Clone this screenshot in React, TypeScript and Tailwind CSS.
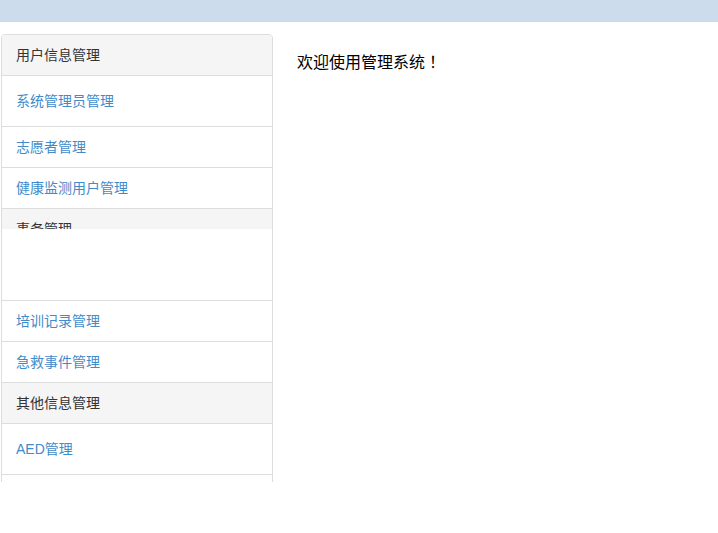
import React from "react";

const font = { fontFamily: '"Liberation Sans", "Noto Sans CJK SC", sans-serif' };
const cjk = { fontFamily: '"Noto Sans CJK SC", "Liberation Sans", sans-serif' };
const tc = { fontFamily: '"Noto Sans CJK TC", "Noto Sans CJK SC", sans-serif' };

function Header({ text, clip }: { text: string; clip?: boolean }) {
  return (
    <div className={`border-b border-[#dddddd] bg-[#f5f5f5] overflow-hidden ${clip ? "h-[20px] border-b-0" : "h-[41px]"}`}>
      <div className="h-[40px] flex items-center pl-[14px] text-[14px] text-[#333333]">{text}</div>
    </div>
  );
}

function Item({ text, tall }: { text: string; tall?: boolean }) {
  return (
    <div className={`border-b border-[#dddddd] bg-white flex items-center pl-[14px] text-[14px] text-[#428bca] ${tall ? "h-[51px]" : "h-[41px]"}`}>
      {text}
    </div>
  );
}

export default function App() {
  return (
    <div className="w-[718px] h-[533px] bg-white overflow-hidden" style={font}>
      <div className="h-[22px] bg-[#cddcec]" />
      <div className="flex">
        <div className="h-[460px] overflow-hidden pt-[12px] pl-[1px]">
          <div className="w-[272px] border border-[#dddddd] rounded-t-[4px] overflow-hidden">
            <Header text="用户信息管理" />
            <Item text="系统管理员管理" tall />
            <Item text="志愿者管理" />
            <Item text="健康监测用户管理" />
            <Header text="事务管理" clip />
            <div className="h-[72px] bg-white border-b border-[#dddddd]" />
            <Item text="培训记录管理" />
            <Item text="急救事件管理" />
            <Header text="其他信息管理" />
            <Item text="AED管理" tall />
            <Item text="" />
          </div>
        </div>
        <div className="pl-[24px] pt-[28px] text-[16px] text-black leading-[22px]" style={cjk}>
          欢迎使用管理系统<span style={tc}>！</span>
        </div>
      </div>
    </div>
  );
}
